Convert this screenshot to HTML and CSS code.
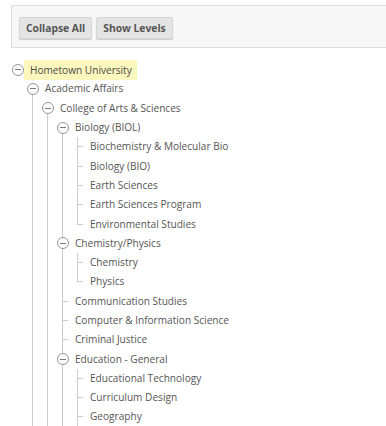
FILE: index.html
```html
<!DOCTYPE html>
<html lang="en">
<head>
    <meta charset="utf-8" />
    <link rel="stylesheet" href="styles.css">
    <title>Org Tree</title>
</head>
<body>
    <div class="page">
        <div class="toolbar">
            <button class="btn">Collapse All</button>
            <button class="btn">Show Levels</button>
        </div>

        <ul class="tree">
            <li class="node">
                <div class="row"><span class="toggle"></span><span class="label selected">Hometown University</span></div>
                <ul>
                    <li class="node">
                        <div class="row"><span class="toggle"></span><span class="label">Academic Affairs</span></div>
                        <ul>
                            <li class="node">
                                <div class="row"><span class="toggle"></span><span class="label">College of Arts &amp; Sciences</span></div>
                                <ul>
                                    <li class="node">
                                        <div class="row"><span class="toggle"></span><span class="label">Biology (BIOL)</span></div>
                                        <ul>
                                            <li class="leaf"><div class="row"><span class="stub"></span><span class="label">Biochemistry &amp; Molecular Bio</span></div></li>
                                            <li class="leaf"><div class="row"><span class="stub"></span><span class="label">Biology (BIO)</span></div></li>
                                            <li class="leaf"><div class="row"><span class="stub"></span><span class="label">Earth Sciences</span></div></li>
                                            <li class="leaf"><div class="row"><span class="stub"></span><span class="label">Earth Sciences Program</span></div></li>
                                            <li class="leaf"><div class="row"><span class="stub"></span><span class="label">Environmental Studies</span></div></li>
                                        </ul>
                                    </li>
                                    <li class="node">
                                        <div class="row"><span class="toggle"></span><span class="label">Chemistry/Physics</span></div>
                                        <ul>
                                            <li class="leaf"><div class="row"><span class="stub"></span><span class="label">Chemistry</span></div></li>
                                            <li class="leaf"><div class="row"><span class="stub"></span><span class="label">Physics</span></div></li>
                                        </ul>
                                    </li>
                                    <li class="leaf"><div class="row"><span class="stub"></span><span class="label">Communication Studies</span></div></li>
                                    <li class="leaf"><div class="row"><span class="stub"></span><span class="label">Computer &amp; Information Science</span></div></li>
                                    <li class="leaf"><div class="row"><span class="stub"></span><span class="label">Criminal Justice</span></div></li>
                                    <li class="node">
                                        <div class="row"><span class="toggle"></span><span class="label">Education - General</span></div>
                                        <ul>
                                            <li class="leaf"><div class="row"><span class="stub"></span><span class="label">Educational Technology</span></div></li>
                                            <li class="leaf"><div class="row"><span class="stub"></span><span class="label">Curriculum Design</span></div></li>
                                            <li class="leaf"><div class="row"><span class="stub"></span><span class="label">Geography</span></div></li>
                                            <li class="leaf"><div class="row"><span class="stub"></span><span class="label">History</span></div></li>
                                        </ul>
                                    </li>
                                    <li class="leaf"><div class="row"><span class="stub"></span><span class="label">English</span></div></li>
                                </ul>
                            </li>
                            <li class="leaf"><div class="row"><span class="stub"></span><span class="label">College of Business</span></div></li>
                        </ul>
                    </li>
                    <li class="leaf"><div class="row"><span class="stub"></span><span class="label">Student Affairs</span></div></li>
                </ul>
            </li>
        </ul>
    </div>
</body>
</html>
```

FILE: styles.css
```css
html, body {
    margin: 0;
    height: 100%;
    overflow: hidden;
    background: #ffffff;
}

body {
    font-family: "Open Sans", "Liberation Sans", sans-serif;
    color: #555555;
}

.page {
    padding: 5px 0 0 11px;
}

/* toolbar with the two buttons */
.toolbar {
    background-color: #f7f7f7;
    border: 1px solid #dddddd;
    border-right: none;
    padding: 11px 7px 8px 7px;
    display: flex;
    gap: 4px;
}

.btn {
    font-family: "Open Sans", "Liberation Sans", sans-serif;
    font-size: 10.3px;
    font-weight: bold;
    color: #555555;
    background-color: #e4e4e4;
    border: 1px solid #d6d6d6;
    border-radius: 2px;
    box-shadow: 0 1px 1px rgba(0, 0, 0, 0.18);
    height: 22px;
    padding: 0 6px;
    cursor: pointer;
}

/* tree */
.tree, .tree ul {
    list-style: none;
    margin: 0;
    padding: 0;
}

.tree {
    margin-top: 12px;
    padding-left: 1px;
}

.tree ul {
    padding-left: 15px;
}

.tree ul li {
    background-image: linear-gradient(#cccccc, #cccccc);
    background-repeat: no-repeat;
    background-position: 5px 0;
    background-size: 1px 100%;
}

.tree ul li.node:first-child {
    background-position: 5px 10px;
}

.tree ul li:last-child {
    background-size: 1px 10px;
}

.tree ul li.node:first-child:last-child {
    background-size: 0 0;
}

.row {
    display: flex;
    align-items: center;
    height: 19.3px;
}

.toggle {
    width: 10px;
    height: 10px;
    border: 1px solid #949494;
    border-radius: 50%;
    background: #ffffff;
    flex: none;
    margin-left: -0.5px;
    margin-right: -0.5px;
}

.toggle::after {
    content: "";
    display: block;
    width: 6px;
    height: 1px;
    background: #7a7a7a;
    margin: 4.5px 0 0 2px;
}

.stub {
    width: 11px;
    height: 1px;
    flex: none;
    background: linear-gradient(#cccccc, #cccccc) no-repeat 5px 0 / 6px 1px;
}

.label {
    font-size: 10.1px;
    line-height: 19px;
    margin-left: 1px;
    padding: 0 5px 0 6px;
    white-space: nowrap;
}

.label.selected {
    background-color: #fcf7bd;
    color: #4a4a4a;
    line-height: 20px;
}
```
